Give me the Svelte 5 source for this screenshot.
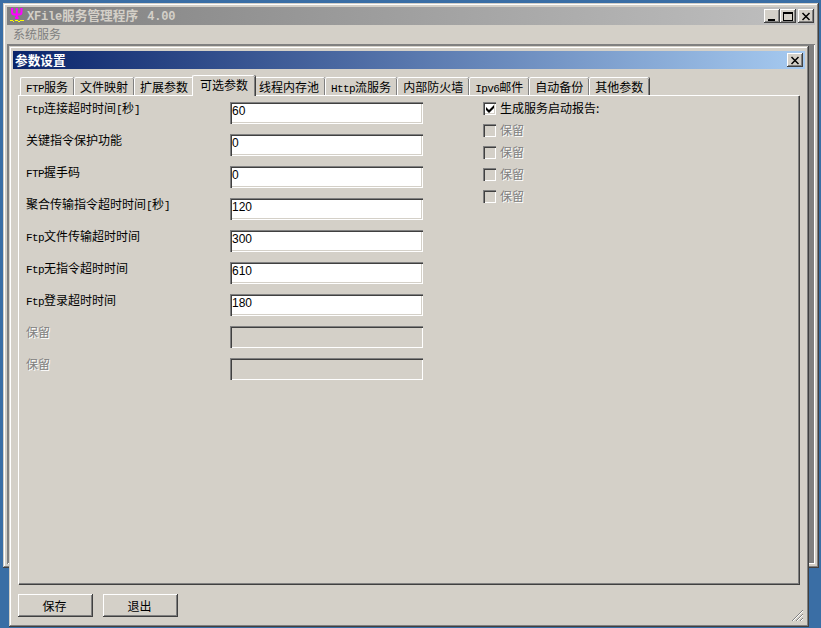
<script>
  const tabs = [
    [['l','FTP'],['c','服务']],
    [['c','文件映射']],
    [['c','扩展参数']],
    [['c','可选参数']],
    [['c','线程内存池']],
    [['l','Http'],['c','流服务']],
    [['c','内部防火墙']],
    [['l','Ipv6'],['c','邮件']],
    [['c','自动备份']],
    [['c','其他参数']]
  ];
  const fields = [
    { label: [['l','Ftp'],['c','连接超时时间'],['l','['],['c','秒'],['l',']']], value: '60' },
    { label: [['c','关键指令保护功能']], value: '0' },
    { label: [['l','FTP'],['c','握手码']], value: '0' },
    { label: [['c','聚合传输指令超时时间'],['l','['],['c','秒'],['l',']']], value: '120' },
    { label: [['l','Ftp'],['c','文件传输超时时间']], value: '300' },
    { label: [['l','Ftp'],['c','无指令超时时间']], value: '610' },
    { label: [['l','Ftp'],['c','登录超时时间']], value: '180' },
    { label: [['c','保留']], value: '', disabled: true },
    { label: [['c','保留']], value: '', disabled: true }
  ];
  const checks = [
    { label: '生成服务启动报告:', checked: true },
    { label: '保留', disabled: true },
    { label: '保留', disabled: true },
    { label: '保留', disabled: true },
    { label: '保留', disabled: true }
  ];
</script>

{#snippet mixed(parts)}
  {#each parts as [kind, text]}<span class={kind === 'l' ? 'latin' : ''}>{text}</span>{/each}
{/snippet}

{#snippet closeGlyph()}
  <svg width="10" height="9" viewBox="0 0 10 9" aria-hidden="true">
    <path d="M1.500 1 8.500 8M8.500 1 1.500 8" stroke="#000" stroke-width="1.500" fill="none" />
  </svg>
{/snippet}

<div class="desktop">
  <section class="window main">
    <header class="titlebar inactive">
      <svg class="appicon" width="16" height="16" viewBox="0 0 16 16" aria-hidden="true">
        <path d="M2 1V5Q2 7.500 4.500 7.500H9Q11.500 7.500 11.500 5V1M6.800 1V11M5 11H8.600" stroke="#ff00ff" stroke-width="2" fill="none" />
        <path d="M0 13h3v1H0zM3 14h1v1H3zM5 13h3v1H5zM8 14h2v1H8zM10 13h4v1h-4z" fill="#ffff00" />
      </svg>
      <span class="title-text"><span class="latin">XFile</span>服务管理程序<span class="latin ver">4.00</span></span>
      <div class="caption-buttons">
        <button class="cap" aria-label="最小化"><i class="min"></i></button>
        <button class="cap" aria-label="最大化"><i class="max"></i></button>
        <button class="cap close" aria-label="关闭">{@render closeGlyph()}</button>
      </div>
    </header>
    <nav class="menu">系统服务</nav>
    <div class="client"></div>
  </section>

  <section class="window dialog">
    <header class="titlebar active">
      <span class="title-text">参数设置</span>
      <button class="cap dclose" aria-label="关闭">{@render closeGlyph()}</button>
    </header>

    <div class="tabs">
      {#each tabs as parts, i}
        <div class="tab" class:selected={i === 3}>{@render mixed(parts)}</div>
      {/each}
    </div>

    <div class="pane">
      <div class="form">
        {#each fields as f}
          <div class="row">
            <label class="lbl" class:off={f.disabled}>{@render mixed(f.label)}</label>
            <input class="edit" class:off={f.disabled} value={f.value} disabled={f.disabled} />
          </div>
        {/each}
      </div>
      <div class="checks">
        {#each checks as c}
          <div class="check" class:off={c.disabled}>
            <span class="box">
              {#if c.checked}
                <svg width="9" height="9" viewBox="0 0 9 9" aria-hidden="true"><path d="M1 3v3l3 3 5-5V1L4 6z" fill="#000" /></svg>
              {/if}
            </span>
            <span class="cl">{c.label}</span>
          </div>
        {/each}
      </div>
    </div>

    <footer class="foot">
      <button class="btn">保存</button>
      <button class="btn">退出</button>
      <svg class="grip" width="13" height="13" viewBox="0 0 13 13" aria-hidden="true">
        <path d="M12 1 1 12M12 5 5 12M12 9 9 12" stroke="#808080" stroke-width="1" fill="none" />
        <path d="M12 2 2 12M12 6 6 12M12 10 10 12" stroke="#ffffff" stroke-width="1" fill="none" />
      </svg>
    </footer>
  </section>
</div>

<style>
  :global(body) {
    margin: 0;
    background: #3a6ea5;
    overflow: hidden;
  }
  .desktop {
    position: relative;
    width: 821px;
    height: 628px;
    overflow: hidden;
    font: 12px/14px "Noto Sans CJK SC", sans-serif;
    color: #000;
  }
  .latin {
    font-family: "Liberation Mono", monospace;
    font-size: 11px;
    letter-spacing: -0.6px;
  }
  .window {
    position: absolute;
    box-sizing: border-box;
    background: #d4d0c8;
    box-shadow: inset -1px -1px 0 #404040, inset 1px 1px 0 #d4d0c8, inset -2px -2px 0 #808080, inset 2px 2px 0 #fff;
    display: flex;
    flex-direction: column;
  }
  .main {
    left: 3px;
    top: 3px;
    width: 816px;
    height: 565px;
    padding: 4px;
  }
  .dialog {
    left: 9px;
    top: 46px;
    width: 800px;
    height: 581px;
    padding: 5px 4px 4px;
  }
  .titlebar {
    display: flex;
    align-items: center;
    height: 18px;
    flex: none;
    font-weight: 700;
  }
  .titlebar.inactive {
    background: linear-gradient(90deg, #808080, #c0c0c0);
    color: #d4d0c8;
    padding-left: 3px;
  }
  .titlebar.active {
    background: linear-gradient(90deg, #0a246a, #a6caf0);
    color: #fff;
    padding-left: 2px;
    justify-content: space-between;
    padding-right: 2px;
  }
  .title-text {
    font-size: 12.700px;
  }
  .title-text .latin {
    font-size: 12px;
    font-weight: 700;
    letter-spacing: -0.200px;
  }
  .title-text .ver {
    margin-left: 9px;
  }
  .appicon {
    margin-right: 1px;
    flex: none;
    align-self: flex-start;
  }
  .caption-buttons {
    margin-left: auto;
    display: flex;
    padding-right: 1px;
  }
  .cap {
    box-sizing: border-box;
    width: 16px;
    height: 14px;
    padding: 0;
    border: 0;
    background: #d4d0c8;
    box-shadow: inset -1px -1px 0 #404040, inset 1px 1px 0 #fff, inset -2px -2px 0 #808080;
    display: flex;
    align-items: center;
    justify-content: center;
  }
  .cap.close {
    margin-left: 2px;
  }
  .min {
    display: block;
    width: 7px;
    height: 2px;
    background: #000;
    margin: 7px 2px 0 0;
  }
  .max {
    display: block;
    box-sizing: border-box;
    width: 10px;
    height: 9px;
    border: 1px solid #000;
    border-top-width: 2px;
  }
  .menu {
    height: 18px;
    line-height: 18px;
    padding-left: 6px;
    color: #808080;
    flex: none;
  }
  .client {
    flex: 1;
    background: #808080;
    box-shadow: inset 1px 1px 0 #808080, inset -1px -1px 0 #fff;
    margin-top: 1px;
  }
  .tabs {
    display: flex;
    align-items: flex-end;
    height: 26px;
    padding-left: 7px;
    flex: none;
    position: relative;
    z-index: 1;
  }
  .tab {
    box-sizing: border-box;
    height: 18px;
    line-height: 17px;
    padding: 0 6px 0 5px;
    border-top: 1px solid #fff;
    border-left: 1px solid #fff;
    box-shadow: inset -1px 0 0 #808080, 1px 0 0 #404040;
    border-radius: 2px 2px 0 0;
    white-space: nowrap;
  }
  .tab.selected {
    height: 21px;
    margin: 0 -2px -1px;
    padding: 0 7px 3px 7px;
    background: #d4d0c8;
    line-height: 17px;
    position: relative;
  }
  .pane {
    box-sizing: border-box;
    margin-left: 5px;
    width: 781px;
    height: 489px;
    flex: none;
    border-top: 1px solid #fff;
    border-left: 1px solid #fff;
    box-shadow: inset -1px -1px 0 #808080, 1px 1px 0 #404040;
    display: flex;
    padding: 6px 0 0 7px;
  }
  .form {
    width: 457px;
    flex: none;
  }
  .row {
    display: flex;
    height: 32px;
  }
  .lbl {
    width: 204px;
    flex: none;
    margin-top: -1px;
  }
  .lbl.off {
    color: #808080;
    text-shadow: 1px 1px 0 #fff;
  }
  .edit {
    box-sizing: border-box;
    width: 193px;
    height: 22px;
    margin: 0;
    padding: 0 0 4px 2px;
    border: 0;
    background: #fff;
    font: 12px "Liberation Sans", sans-serif;
    color: #000;
    box-shadow: inset 1px 1px 0 #808080, inset 2px 2px 0 #404040, inset -1px -1px 0 #fff, inset -2px -2px 0 #d4d0c8;
    outline: none;
  }
  .edit.off {
    background: #d4d0c8;
  }
  .check {
    display: flex;
    align-items: center;
    height: 22px;
    margin-top: -5px;
    margin-bottom: 5px;
  }
  .box {
    box-sizing: border-box;
    width: 13px;
    height: 13px;
    background: #fff;
    box-shadow: inset 1px 1px 0 #808080, inset 2px 2px 0 #404040, inset -1px -1px 0 #fff, inset -2px -2px 0 #d4d0c8;
    display: flex;
    align-items: center;
    justify-content: center;
    flex: none;
  }
  .cl {
    margin-left: 4px;
  }
  .check.off .box {
    background: #d4d0c8;
  }
  .check.off .cl {
    color: #808080;
    text-shadow: 1px 1px 0 #fff;
  }
  .foot {
    flex: 1;
    display: flex;
    gap: 10px;
    padding: 10px 0 0 5px;
    position: relative;
  }
  .btn {
    box-sizing: border-box;
    width: 75px;
    height: 23px;
    padding: 0 2px 0 0;
    border: 0;
    background: #d4d0c8;
    font: 12px "Noto Sans CJK SC", sans-serif;
    color: #000;
    box-shadow: inset -1px -1px 0 #404040, inset 1px 1px 0 #fff, inset -2px -2px 0 #808080;
  }
  .grip {
    position: absolute;
    right: 1px;
    bottom: 1px;
  }
</style>
